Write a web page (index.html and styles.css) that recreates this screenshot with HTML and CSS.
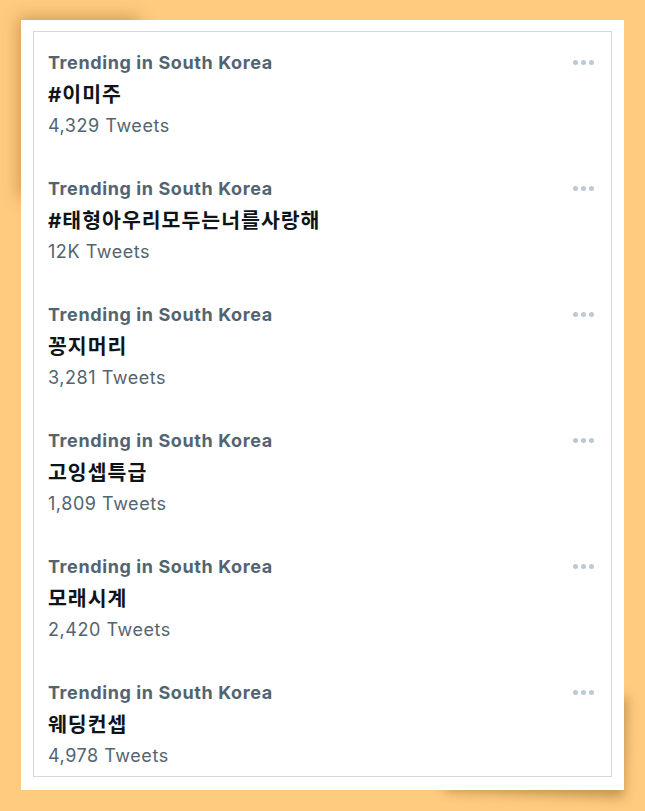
FILE: index.html
```html
<!DOCTYPE html>
<html lang="ko">
<head>
<meta charset="utf-8">
<link rel="stylesheet" href="styles.css">
</head>
<body>
<div class="card">
  <div class="list">
    <div class="trend">
      <div class="text">
        <div class="meta">Trending in South Korea</div>
        <div class="name">#이미주</div>
        <div class="count">4,329 Tweets</div>
      </div>
      <div class="more"><span></span><span></span><span></span></div>
    </div>
    <div class="trend">
      <div class="text">
        <div class="meta">Trending in South Korea</div>
        <div class="name">#태형아우리모두는너를사랑해</div>
        <div class="count">12K Tweets</div>
      </div>
      <div class="more"><span></span><span></span><span></span></div>
    </div>
    <div class="trend">
      <div class="text">
        <div class="meta">Trending in South Korea</div>
        <div class="name">꽁지머리</div>
        <div class="count">3,281 Tweets</div>
      </div>
      <div class="more"><span></span><span></span><span></span></div>
    </div>
    <div class="trend">
      <div class="text">
        <div class="meta">Trending in South Korea</div>
        <div class="name">고잉셉특급</div>
        <div class="count">1,809 Tweets</div>
      </div>
      <div class="more"><span></span><span></span><span></span></div>
    </div>
    <div class="trend">
      <div class="text">
        <div class="meta">Trending in South Korea</div>
        <div class="name">모래시계</div>
        <div class="count">2,420 Tweets</div>
      </div>
      <div class="more"><span></span><span></span><span></span></div>
    </div>
    <div class="trend">
      <div class="text">
        <div class="meta">Trending in South Korea</div>
        <div class="name">웨딩컨셉</div>
        <div class="count">4,978 Tweets</div>
      </div>
      <div class="more"><span></span><span></span><span></span></div>
    </div>
  </div>
</div>
</body>
</html>
```
FILE: styles.css
```css
html, body {
  margin: 0;
  padding: 0;
}
body {
  background: #fecb7f;
  width: 645px;
  height: 811px;
  overflow: hidden;
  padding: 20px 0 0 21px;
  box-sizing: border-box;
  font-family: Inter, "Noto Sans CJK KR", sans-serif;
}
.card {
  position: relative;
  width: 603px;
  height: 770px;
  background: #fff;
  padding: 11px 12px 13px 12px;
  box-sizing: border-box;
}
.card::before {
  content: "";
  position: absolute;
  top: 8px;
  left: 8px;
  width: 120px;
  height: 180px;
  box-shadow: -10px -10px 16px rgba(110, 70, 10, 0.38);
  z-index: -1;
}
.card::after {
  content: "";
  position: absolute;
  right: 6px;
  bottom: 6px;
  width: 180px;
  height: 100px;
  box-shadow: 8px 10px 12px rgba(110, 70, 10, 0.4);
  transform: rotate(2deg);
  z-index: -1;
}
.list {
  height: 746px;
  border: 1px solid #d6d6d6;
  overflow: hidden;
  box-sizing: border-box;
}
.trend {
  display: flex;
  justify-content: space-between;
  align-items: flex-start;
  height: 126px;
  padding: 15px 17px 0 14px;
  box-sizing: border-box;
}
.meta {
  font-size: 18px;
  font-weight: 700;
  color: #536471;
  line-height: 32px;
  letter-spacing: 0.6px;
}
.name {
  font-size: 20.5px;
  font-weight: 700;
  color: #0f1419;
  line-height: 32px;
  letter-spacing: 1px;
}
.count {
  font-size: 18px;
  color: #536471;
  line-height: 30px;
  letter-spacing: 0.55px;
}
.more {
  display: flex;
  gap: 3px;
  margin-top: 13px;
}
.more span {
  width: 5px;
  height: 5px;
  border-radius: 50%;
  background: #b9cad4;
}
```
